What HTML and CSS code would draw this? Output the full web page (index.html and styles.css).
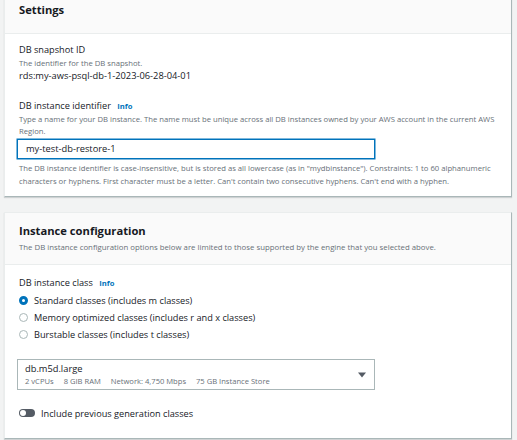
FILE: index.html
```html
<!DOCTYPE html>
<html>
<head>
<meta charset="utf-8">
<link rel="stylesheet" href="styles.css">
</head>
<body>
<div class="page">
  <section class="card card-first">
    <div class="card-header">
      <h2 class="title">Settings</h2>
    </div>
    <div class="card-body body-settings">
      <div class="field">
        <div class="label">DB snapshot ID</div>
        <div class="desc">The identifier for the DB snapshot.</div>
        <div class="value">rds:my-aws-psql-db-1-2023-06-28-04-01</div>
      </div>
      <div class="field field-gap">
        <div class="label">DB instance identifier <span class="info">Info</span></div>
        <div class="desc">Type a name for your DB instance. The name must be unique across all DB instances owned by your AWS account in the current AWS Region.</div>
        <div class="input">my-test-db-restore-1</div>
        <div class="help">The DB instance identifier is case-insensitive, but is stored as all lowercase (as in "mydbinstance"). Constraints: 1 to 60 alphanumeric characters or hyphens. First character must be a letter. Can't contain two consecutive hyphens. Can't end with a hyphen.</div>
      </div>
    </div>
  </section>

  <section class="card card-second">
    <div class="card-header header-tall">
      <h2 class="title">Instance configuration</h2>
      <div class="header-desc">The DB instance configuration options below are limited to those supported by the engine that you selected above.</div>
    </div>
    <div class="card-body body-instance">
      <div class="label">DB instance class <span class="info">Info</span></div>
      <div class="radios">
        <div class="radio-row"><span class="radio radio-on"></span><span>Standard classes (includes m classes)</span></div>
        <div class="radio-row"><span class="radio"></span><span>Memory optimized classes (includes r and x classes)</span></div>
        <div class="radio-row"><span class="radio"></span><span>Burstable classes (includes t classes)</span></div>
      </div>
      <div class="select">
        <div class="select-text">
          <div class="select-main">db.m5d.large</div>
          <div class="select-sub"><span>2 vCPUs</span><span>8 GIB RAM</span><span>Network: 4,750 Mbps</span><span>75 GB Instance Store</span></div>
        </div>
        <svg class="caret" width="8" height="6" viewBox="0 0 8 6"><path d="M0 0.5 H8 L4 5.5 Z" fill="#545b64"/></svg>
      </div>
      <div class="toggle-row">
        <span class="toggle"><span class="knob"></span></span>
        <span>Include previous generation classes</span>
      </div>
    </div>
  </section>
</div>
</body>
</html>
```
FILE: styles.css
```css
* { box-sizing: border-box; }
html, body { margin: 0; padding: 0; }
body {
  background: #f2f3f3;
  font-family: "Open Sans", "Noto Sans", sans-serif;
  color: #16191f;
  width: 517px;
  height: 440px;
  overflow: hidden;
}
.page {
  padding: 0 5px 0 4px;
}
.card {
  background: #fff;
  border: 1px solid #eaeded;
  border-right-color: #aab7b8;
  border-bottom-color: #aab7b8;
  box-shadow: 0 1px 1px 0 rgba(0, 28, 36, 0.15);
}
.card-first {
  margin-top: -12px;
}
.card-second {
  margin-top: 15px;
}
.card-header {
  background: #fafafa;
  border-bottom: 1px solid #eaeded;
  padding: 13px 14px 15px;
}
.header-tall {
  padding: 10px 14px 11px;
}
.title {
  margin: 0;
  font-size: 11.2px;
  line-height: 16px;
  font-weight: 700;
}
.header-desc {
  margin-top: 2px;
  font-size: 7.8px;
  line-height: 12px;
  color: #687078;
}
.card-body {
  padding: 9px 14px 9px;
}
.body-instance {
  padding: 11px 14px 18px;
}
.label {
  font-size: 9.2px;
  line-height: 14px;
}
.info {
  color: #0073bb;
  font-weight: 700;
  font-size: 7.6px;
  margin-left: 4px;
}
.desc {
  font-size: 7.7px;
  line-height: 12px;
  color: #687078;
}
.value {
  font-size: 9.3px;
  line-height: 14px;
}
.field-gap {
  margin-top: 16px;
}
.input {
  margin-top: 2px;
  margin-left: -2px;
  width: 358px;
  height: 20px;
  border: 1px solid #0073bb;
  box-shadow: 0 0 0 0.5px #0073bb;
  padding: 0 8px;
  font-size: 9.3px;
  line-height: 18px;
}
.help {
  margin-top: 3px;
  font-size: 7.7px;
  line-height: 12.5px;
  color: #687078;
}
.radios {
  margin-top: 1.5px;
}
.radio-row {
  display: flex;
  align-items: center;
  height: 17px;
  font-size: 9.2px;
  gap: 6px;
}
.radio {
  width: 9px;
  height: 9px;
  border-radius: 50%;
  border: 1px solid #aab7b8;
  flex: none;
}
.radio-on {
  border: 3px solid #0073bb;
}
.select {
  margin-top: 16.5px;
  margin-left: -2px;
  width: 358px;
  height: 31px;
  border: 1px solid #aab7b8;
  display: flex;
  align-items: center;
  padding: 0 8px 0 7px;
}
.select-text {
  flex: 1;
}
.select-main {
  font-size: 9.3px;
  line-height: 13px;
}
.select-sub {
  display: flex;
  gap: 10px;
  font-size: 7.6px;
  line-height: 12px;
  color: #687078;
}
.caret {
  flex: none;
}
.toggle-row {
  margin-top: 16px;
  display: flex;
  align-items: center;
  gap: 6px;
  height: 14px;
  font-size: 9.2px;
}
.toggle {
  position: relative;
  width: 16px;
  height: 8px;
  border-radius: 4px;
  background: #545b64;
  flex: none;
}
.knob {
  position: absolute;
  left: 1px;
  top: 1px;
  width: 6px;
  height: 6px;
  border-radius: 50%;
  background: #fff;
}
```
